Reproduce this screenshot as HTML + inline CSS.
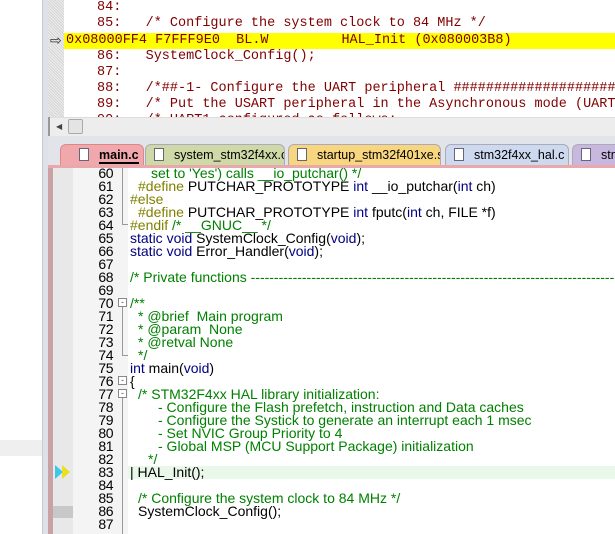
<!DOCTYPE html>
<html><head><meta charset="utf-8"><style>
*{margin:0;padding:0;box-sizing:border-box}
html,body{width:615px;height:534px;overflow:hidden}
body{background:#fff;position:relative;font-family:"Liberation Sans",Arial,sans-serif}
.abs{position:absolute}
.clip{position:absolute;left:0;top:0;width:615px;height:534px;overflow:hidden}
.dis{font-family:"Liberation Mono",monospace;font-size:13.5px;color:#800000;white-space:pre;line-height:16px;height:16px}
.ed{font-size:14px;line-height:13px;height:13px;white-space:pre;letter-spacing:0}
.ln{position:absolute;left:60px;width:53px;text-align:right;color:#000;font-size:14px;letter-spacing:-0.5px}
.cd{position:absolute;left:130px}
.g{color:#008000}.b{color:#000080}.o{color:#808000}
.tab{position:absolute;top:144px;height:22px;font-size:12.5px;line-height:20px;border-radius:6px 6px 0 0;border:1px solid #aab;white-space:nowrap;overflow:hidden}
.doc{display:inline-block;width:10px;height:13px;border:1px solid #667;background:#fff;vertical-align:-2px;margin-right:10px}
.fb{position:absolute;width:9px;height:9px;border:1px solid #888;background:#fff;font-size:9px;line-height:7px;text-align:center;color:#555}
</style></head><body><div class="clip">
<div class="abs" style="left:0;top:440px;width:42px;height:16px;background:#efefef"></div>
<div class="abs" style="left:42px;top:0;width:6px;height:534px;background:#dfe1e8;border-left:1px solid #c8cad4"></div>
<div class="abs" style="left:48px;top:0;width:16px;height:118px;background:repeating-linear-gradient(45deg,#d4d4d4 0 1px,#eee 1px 2px)"></div>
<div class="abs" style="left:64px;top:33px;width:551px;height:16px;background:#ffff00"></div>
<div class="abs dis" style="left:97px;top:0px">84:</div>
<div class="abs dis" style="left:97px;top:16px">85:   /* Configure the system clock to 84 MHz */</div>
<div class="abs dis" style="left:66px;top:33px">0x08000FF4 F7FFF9E0  BL.W         HAL_Init (0x080003B8)</div>
<div class="abs" style="left:50px;top:32px;font-size:14px;color:#333">⇨</div>
<div class="abs dis" style="left:97px;top:49px">86:   SystemClock_Config();</div>
<div class="abs dis" style="left:97px;top:65px">87:</div>
<div class="abs dis" style="left:97px;top:81px">88:   /*##-1- Configure the UART peripheral ###########################</div>
<div class="abs dis" style="left:97px;top:97px">89:   /* Put the USART peripheral in the Asynchronous mode (UART Mode) */</div>
<div class="abs dis" style="left:97px;top:113px;height:5px;overflow:hidden">90:   /* UART1 configured as follows:</div>
<div class="abs" style="left:48px;top:117px;width:567px;height:19px;background:#ededed;border-top:1px solid #ddd"></div>
<div class="abs" style="left:48px;top:117px;width:2px;height:19px;background:#999"></div>
<div class="abs" style="left:56px;top:122px;font-size:8px;color:#444">◀</div>
<div class="abs" style="left:68px;top:119px;width:15px;height:15px;background:#e4e4e4;border:1px solid #aaa;border-radius:2px"></div>
<div class="abs" style="left:48px;top:136px;width:567px;height:30px;background:#e2e4ea"></div>
<div class="tab" style="left:60px;width:84px;background:#f0a8ac;padding-left:18px;border-color:#d88"><span class="doc"></span><b style="border-bottom:2px solid #000">main.c</b></div>
<div class="tab" style="left:145px;width:140px;background:#cfd9a8;padding-left:8px"><span class="doc"></span>system_stm32f4xx.c</div>
<div class="tab" style="left:288px;width:153px;background:#f8d680;padding-left:8px"><span class="doc"></span>startup_stm32f401xe.s</div>
<div class="tab" style="left:445px;width:124px;background:#cdd9ef;padding-left:8px"><span class="doc"></span>stm32f4xx_hal.c</div>
<div class="tab" style="left:572px;width:43px;background:#c8b8e0;padding-left:8px;border-right:none;border-radius:6px 0 0 0"><span class="doc"></span>stm</div>
<div class="abs" style="left:48px;top:165px;width:567px;height:369px;background:#fff"></div>
<div class="abs" style="left:48px;top:165px;width:5px;height:369px;background:#c9a0a4"></div>
<div class="abs" style="left:48px;top:165px;width:567px;height:3px;background:#e8a8ac"></div>
<div class="abs" style="left:53px;top:168px;width:20px;height:366px;background:#e8e8e8"></div>
<div class="abs" style="left:73px;top:168px;width:55px;height:366px;background:#f4f4f4"></div>
<div class="abs" style="left:53px;top:506px;width:20px;height:12px;background:#c8c8c8"></div>
<div class="abs" style="left:55px;top:465px;width:0;height:0;border-top:7px solid transparent;border-bottom:7px solid transparent;border-left:8px solid #3cc8e8"></div>
<div class="abs" style="left:62px;top:465px;width:0;height:0;border-top:7px solid transparent;border-bottom:7px solid transparent;border-left:8px solid #e8e020"></div>
<div class="abs" style="left:128px;top:466px;width:487px;height:13px;background:#eaf8ea"></div>
<div class="abs" style="left:122px;top:168px;width:1px;height:56px;background:#999"></div>
<div class="abs" style="left:122px;top:224px;width:6px;height:1px;background:#999"></div>
<div class="abs" style="left:122px;top:307px;width:1px;height:48px;background:#999"></div>
<div class="abs" style="left:122px;top:355px;width:6px;height:1px;background:#999"></div>
<div class="abs" style="left:122px;top:398px;width:1px;height:136px;background:#999"></div>
<div class="fb" style="left:118px;top:298px">-</div>
<div class="fb" style="left:118px;top:376px">-</div>
<div class="fb" style="left:118px;top:389px">-</div>
<div class="abs" style="left:0;top:167px;width:615px">
<div class="ed abs" style="top:0"><span class="ln">60</span><span class="cd g" style="left:151px">set to 'Yes') calls __io_putchar() */</span></div>
<div class="ed abs" style="top:13px"><span class="ln">61</span><span class="cd" style="left:138px"><span class="o">#define</span> PUTCHAR_PROTOTYPE <span class="b">int</span> __io_putchar(<span class="b">int</span> ch)</span></div>
<div class="ed abs" style="top:26px"><span class="ln">62</span><span class="cd o">#else</span></div>
<div class="ed abs" style="top:39px"><span class="ln">63</span><span class="cd" style="left:138px"><span class="o">#define</span> PUTCHAR_PROTOTYPE <span class="b">int</span> fputc(<span class="b">int</span> ch, FILE *f)</span></div>
<div class="ed abs" style="top:52px"><span class="ln">64</span><span class="cd"><span class="o">#endif</span> <span class="g">/* __GNUC__ */</span></span></div>
<div class="ed abs" style="top:65px"><span class="ln">65</span><span class="cd"><span class="b">static void</span> SystemClock_Config(<span class="b">void</span>);</span></div>
<div class="ed abs" style="top:78px"><span class="ln">66</span><span class="cd"><span class="b">static void</span> Error_Handler(<span class="b">void</span>);</span></div>
<div class="ed abs" style="top:91px"><span class="ln">67</span></div>
<div class="ed abs" style="top:104px"><span class="ln">68</span><span class="cd g">/* Private functions ----------------------------------------------------------------------------------------</span></div>
<div class="ed abs" style="top:117px"><span class="ln">69</span></div>
<div class="ed abs" style="top:130px"><span class="ln">70</span><span class="cd g">/**</span></div>
<div class="ed abs" style="top:143px"><span class="ln">71</span><span class="cd g" style="left:138px">* @brief  Main program</span></div>
<div class="ed abs" style="top:156px"><span class="ln">72</span><span class="cd g" style="left:138px">* @param  None</span></div>
<div class="ed abs" style="top:169px"><span class="ln">73</span><span class="cd g" style="left:138px">* @retval None</span></div>
<div class="ed abs" style="top:182px"><span class="ln">74</span><span class="cd g" style="left:138px">*/</span></div>
<div class="ed abs" style="top:195px"><span class="ln">75</span><span class="cd"><span class="b">int</span> main(<span class="b">void</span>)</span></div>
<div class="ed abs" style="top:208px"><span class="ln">76</span><span class="cd">{</span></div>
<div class="ed abs" style="top:221px"><span class="ln">77</span><span class="cd g" style="left:138px">/* STM32F4xx HAL library initialization:</span></div>
<div class="ed abs" style="top:234px"><span class="ln">78</span><span class="cd g" style="left:158px">- Configure the Flash prefetch, instruction and Data caches</span></div>
<div class="ed abs" style="top:247px"><span class="ln">79</span><span class="cd g" style="left:158px">- Configure the Systick to generate an interrupt each 1 msec</span></div>
<div class="ed abs" style="top:260px"><span class="ln">80</span><span class="cd g" style="left:158px">- Set NVIC Group Priority to 4</span></div>
<div class="ed abs" style="top:273px"><span class="ln">81</span><span class="cd g" style="left:158px">- Global MSP (MCU Support Package) initialization</span></div>
<div class="ed abs" style="top:286px"><span class="ln">82</span><span class="cd g" style="left:148px">*/</span></div>
<div class="ed abs" style="top:299px"><span class="ln">83</span><span class="cd">| HAL_Init();</span></div>
<div class="ed abs" style="top:312px"><span class="ln">84</span></div>
<div class="ed abs" style="top:325px"><span class="ln">85</span><span class="cd g" style="left:138px">/* Configure the system clock to 84 MHz */</span></div>
<div class="ed abs" style="top:338px"><span class="ln">86</span><span class="cd" style="left:138px">SystemClock_Config();</span></div>
<div class="ed abs" style="top:351px"><span class="ln">87</span></div>
</div>
</div></body></html>
